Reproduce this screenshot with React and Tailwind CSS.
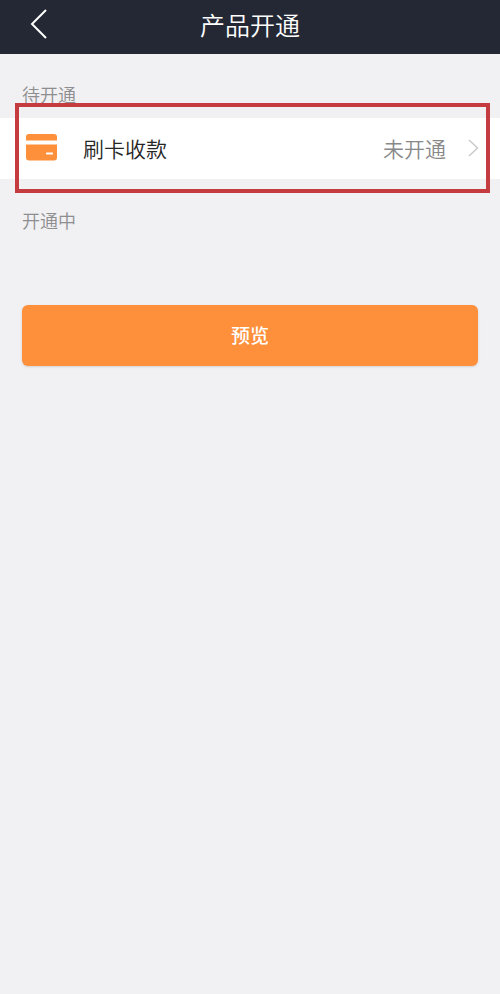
import React from 'react';

function Header({ title }) {
  return (
    <header className="grid grid-cols-[80px_1fr_80px] items-center h-[54px] bg-[#242834] text-white">
      <button type="button" aria-label="返回" className="flex items-center h-full pl-[30px]">
        <svg width="18" height="30" viewBox="0 0 18 30" fill="none" stroke="currentColor" strokeWidth="2" className="-mt-1.5">
          <path d="M16 1 L2 15 L16 29" />
        </svg>
      </button>
      <h1 className="text-center text-[25px] leading-[48px] font-[350] pb-1.5">{title}</h1>
    </header>
  );
}

function CardIcon() {
  return (
    <svg width="32" height="28" viewBox="0 0 32 28" className="shrink-0">
      <path d="M0 6.5 V3 Q0 0 3 0 H28 Q31 0 31 3 V6.5 Z" fill="#fe8f3b" />
      <path d="M0 10.5 H31 V23.5 Q31 26.5 28 26.5 H3 Q0 26.5 0 23.5 Z" fill="#fe8f3b" />
      <rect x="20" y="18.5" width="7" height="2" rx="0.5" fill="#fff" />
    </svg>
  );
}

function ProductRow({ name, status }) {
  return (
    <div className="relative">
      <a href="#" className="flex items-center h-[61px] pl-[26px] pr-[21px] pb-px bg-white">
        <CardIcon />
        <span className="ml-[25px] text-[21px] leading-[30px] font-[350] text-[#262626]">{name}</span>
        <span className="ml-auto text-[21px] leading-[30px] font-[350] text-[#888]">{status}</span>
        <svg width="11" height="18" viewBox="0 0 11 18" fill="none" stroke="#ccc" strokeWidth="1.6" className="ml-[22px]">
          <path d="M1 1 L9.5 9 L1 17" />
        </svg>
      </a>
      {/* marco rojo sobre la fila */}
      <div className="absolute -top-[15px] -bottom-[14px] left-[15px] right-[10px] border-4 border-[#c43c40] pointer-events-none" />
    </div>
  );
}

function App() {
  return (
    <div className="min-h-screen bg-[#f1f0f2] font-['Noto_Sans_CJK_SC',sans-serif]">
      <Header title="产品开通" />
      <main>
        <h2 className="pt-[26px] pb-[10px] px-[22px] text-[18px] leading-[28px] font-[350] text-[#8e8e90]">待开通</h2>
        <ProductRow name="刷卡收款" status="未开通" />
        <h2 className="pt-[27px] px-[22px] text-[18px] leading-[28px] font-[350] text-[#8e8e90]">开通中</h2>
        <div className="px-[22px] pt-[71px]">
          <button
            type="button"
            className="w-full h-[61px] rounded-md bg-[#fe8f3b] text-white text-[19px] font-medium shadow-sm"
          >
            预览
          </button>
        </div>
      </main>
    </div>
  );
}

export default App;
